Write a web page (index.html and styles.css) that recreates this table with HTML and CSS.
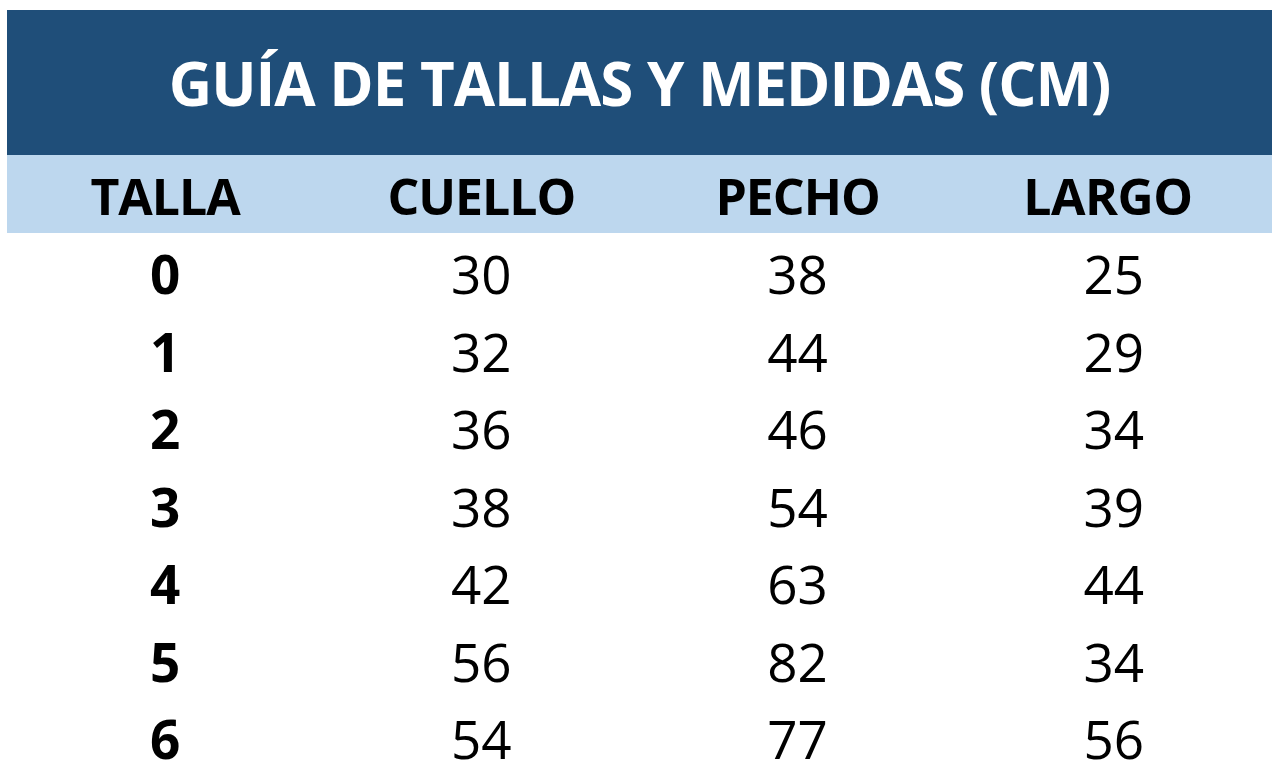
FILE: index.html
```html
<!DOCTYPE html>
<html lang="es">
<head>
<meta charset="utf-8">
<title>Guía de tallas</title>
<link rel="stylesheet" href="styles.css">
</head>
<body>
<div class="guide">
  <div class="title">GUÍA DE TALLAS Y MEDIDAS (CM)</div>
  <div class="row head">
    <div class="cell">TALLA</div>
    <div class="cell">CUELLO</div>
    <div class="cell">PECHO</div>
    <div class="cell shift">LARGO</div>
  </div>
  <div class="row"><div class="cell size">0</div><div class="cell">30</div><div class="cell">38</div><div class="cell">25</div></div>
  <div class="row"><div class="cell size">1</div><div class="cell">32</div><div class="cell">44</div><div class="cell">29</div></div>
  <div class="row"><div class="cell size">2</div><div class="cell">36</div><div class="cell">46</div><div class="cell">34</div></div>
  <div class="row"><div class="cell size">3</div><div class="cell">38</div><div class="cell">54</div><div class="cell">39</div></div>
  <div class="row"><div class="cell size">4</div><div class="cell">42</div><div class="cell">63</div><div class="cell">44</div></div>
  <div class="row"><div class="cell size">5</div><div class="cell">56</div><div class="cell">82</div><div class="cell">34</div></div>
  <div class="row"><div class="cell size">6</div><div class="cell">54</div><div class="cell">77</div><div class="cell">56</div></div>
</div>
</body>
</html>
```
FILE: styles.css
```css
html, body {
  margin: 0;
  padding: 0;
  background: #ffffff;
}
body {
  font-family: "Open Sans", "Noto Sans", sans-serif;
  color: #000000;
  overflow: hidden;
}
.guide {
  width: 1265px;
  margin: 10px 0 0 7px;
}
.title {
  height: 145px;
  background: #1f4e79;
  color: #ffffff;
  font-weight: 700;
  font-size: 60px;
  display: flex;
  align-items: center;
  justify-content: center;
  letter-spacing: -1px;
}
.row {
  display: grid;
  grid-template-columns: repeat(4, 1fr);
  height: 77.5px;
  align-items: center;
}
.row.head {
  height: 78px;
  background: #bdd7ee;
  font-weight: 700;
  letter-spacing: -1px;
}
.cell {
  text-align: center;
  font-size: 53px;
  line-height: 1;
  padding-top: 4px;
}
.row.head .cell {
  font-size: 50px;
  padding-top: 4px;
}
.row.head .shift {
  padding-right: 12px;
  letter-spacing: -0.5px;
}
.size {
  font-weight: 700;
}
```
